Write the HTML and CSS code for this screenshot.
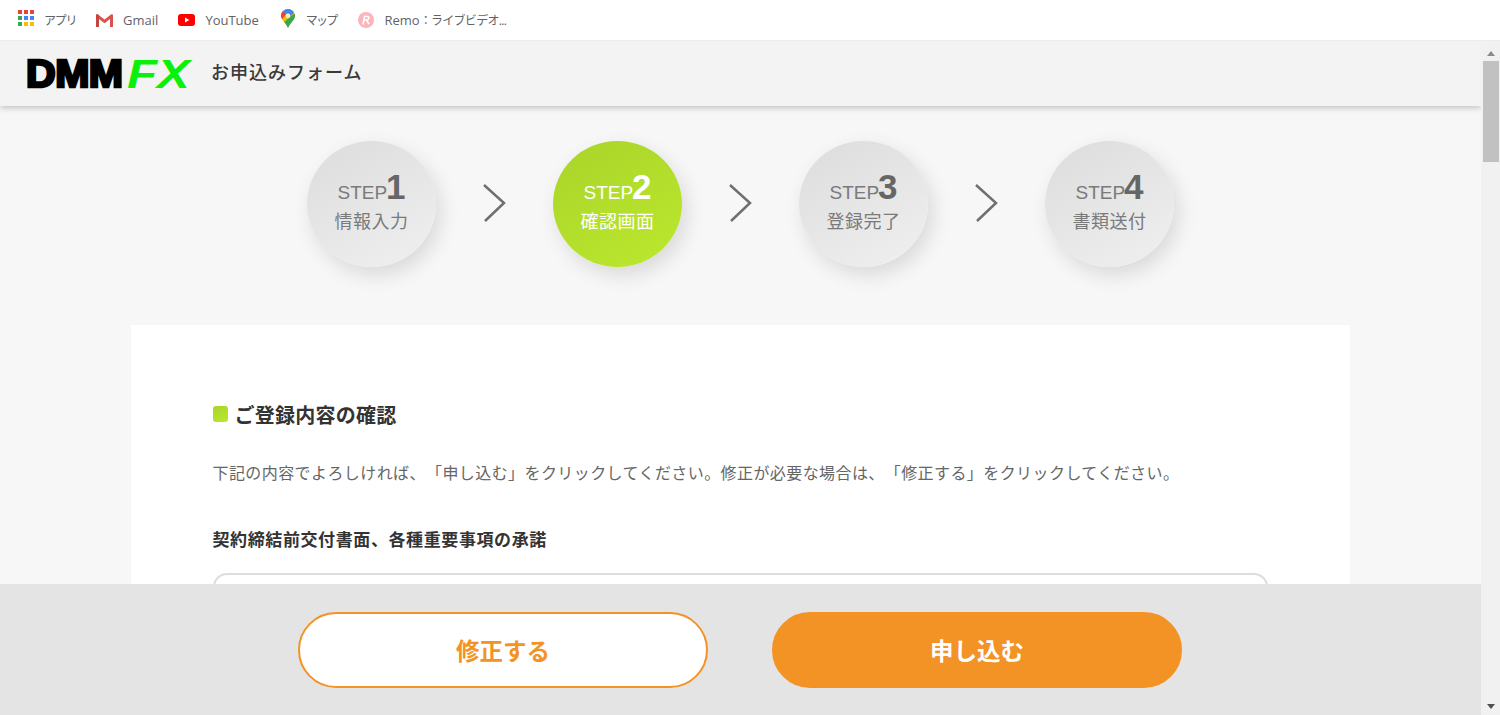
FILE: index.html
```html
<!DOCTYPE html>
<html lang="ja">
<head>
<meta charset="utf-8">
<title>お申込みフォーム</title>
<link rel="stylesheet" href="styles.css">
</head>
<body>
<nav class="bookmarks">
  <a class="bm bm-apps">
    <svg class="ic" width="16" height="16" viewBox="0 0 16 16">
      <rect x="0" y="0" width="4" height="4" fill="#ea4335"/><rect x="6" y="0" width="4" height="4" fill="#ea4335"/><rect x="12" y="0" width="4" height="4" fill="#ea4335"/>
      <rect x="0" y="6" width="4" height="4" fill="#34a853"/><rect x="6" y="6" width="4" height="4" fill="#4285f4"/><rect x="12" y="6" width="4" height="4" fill="#4285f4"/>
      <rect x="0" y="12" width="4" height="4" fill="#34a853"/><rect x="6" y="12" width="4" height="4" fill="#fbbc05"/><rect x="12" y="12" width="4" height="4" fill="#fbbc05"/>
    </svg><span class="kana">アプリ</span></a>
  <a class="bm">
    <svg class="ic" width="17" height="13" viewBox="0 0 17 13">
      <path d="M0 1.500C0 .5 1 0 2 .4L8.500 5.500 15 .4C16 0 17 .5 17 1.500V13H14V5L8.500 9.300 3 5V13H0Z" fill="#d9534a"/>
      <path d="M3 5V13H0V1.500C0 .5 1 0 2 .4L3 1.200Z" fill="#c5453c"/>
    </svg>Gmail</a>
  <a class="bm">
    <svg class="ic" width="17" height="12" viewBox="0 0 17 12">
      <rect width="17" height="12" rx="3" fill="#f00"/><path d="M7 3.500V8.500L11.300 6Z" fill="#fff"/>
    </svg>YouTube</a>
  <a class="bm bm-maps">
    <svg class="ic" width="14" height="19" viewBox="0 0 14 19">
      <path d="M7 0C3 0 0 3 0 6.800 0 11 4.500 13.500 7 19 9.500 13.500 14 11 14 6.800 14 3 11 0 7 0Z" fill="#fbbc05"/>
      <path d="M2 2.100A7 7 0 0 1 7 0V4.500A2.500 2.500 0 0 0 4.800 5.500Z" fill="#4285f4"/>
      <path d="M7 0A7 7 0 0 1 13 3.500L9 8A2.500 2.500 0 0 0 7 4.500Z" fill="#4285f4"/>
      <path d="M0 6.800C0 5 .7 3.400 2 2.100L5 5.500 1.300 10C.5 9 0 8 0 6.800Z" fill="#ea4335"/>
      <path d="M7 19C6 16.500 4.500 14.800 3.200 13L9 8 13.500 4.500C13.800 5.200 14 6 14 6.800 14 11 9.500 13.500 7 19Z" fill="#34a853"/>
      <circle cx="7" cy="6.800" r="2.400" fill="#fbe9b8"/>
    </svg><span class="kana">マップ</span></a>
  <a class="bm bm-remo">
    <svg class="ic" width="16" height="16" viewBox="0 0 16 16">
      <circle cx="8" cy="8" r="8" fill="#fbb5bd"/>
      <path d="M5 12.500 6.500 4.500H9.500C11.500 4.500 11.500 8 8.500 8H6M8.500 8 11 12" fill="none" stroke="#fff" stroke-width="1.600"/>
    </svg>Remo<span class="kana">：ライブビデオ...</span></a>
</nav>

<div class="window">
  <div class="viewport">
    <header class="topbar">
      <div class="logo"><span class="logo-dmm">DMM</span><span class="logo-fx">FX</span></div>
      <div class="form-title">お申込みフォーム</div>
    </header>

    <main class="content">
      <ol class="steps">
        <li class="step">
          <span class="step-top">STEP<b>1</b></span>
          <span class="step-name">情報入力</span>
        </li>
        <li class="arrow"><svg width="24" height="40" viewBox="0 0 24 40"><path d="M2 2 22 20 3 38" fill="none" stroke="#6f6f6f" stroke-width="2.500"/></svg></li>
        <li class="step step-on">
          <span class="step-top">STEP<b>2</b></span>
          <span class="step-name">確認画面</span>
        </li>
        <li class="arrow"><svg width="24" height="40" viewBox="0 0 24 40"><path d="M2 2 22 20 3 38" fill="none" stroke="#6f6f6f" stroke-width="2.500"/></svg></li>
        <li class="step">
          <span class="step-top">STEP<b>3</b></span>
          <span class="step-name">登録完了</span>
        </li>
        <li class="arrow"><svg width="24" height="40" viewBox="0 0 24 40"><path d="M2 2 22 20 3 38" fill="none" stroke="#6f6f6f" stroke-width="2.500"/></svg></li>
        <li class="step">
          <span class="step-top">STEP<b>4</b></span>
          <span class="step-name">書類送付</span>
        </li>
      </ol>

      <section class="card">
        <h2 class="card-title">ご登録内容の確認</h2>
        <p class="lead">下記の内容でよろしければ、「申し込む」をクリックしてください。修正が必要な場合は、「修正する」をクリックしてください。</p>
        <h3 class="sub-title">契約締結前交付書面、各種重要事項の承諾</h3>
        <div class="terms-box"></div>
      </section>
    </main>

    <footer class="actions">
      <button class="btn btn-outline">修正する</button>
      <button class="btn btn-solid">申し込む</button>
    </footer>
  </div>

  <aside class="scrollbar">
    <span class="sb-up"></span>
    <span class="sb-thumb"></span>
    <span class="sb-down"></span>
  </aside>
</div>
</body>
</html>
```

FILE: styles.css
```css
* { box-sizing: border-box; }
html, body { margin: 0; height: 100%; overflow: hidden; }
body {
  display: flex;
  flex-direction: column;
  font-family: "Noto Sans CJK JP", "Liberation Sans", sans-serif;
  background: #fff;
  color: #333;
  text-spacing-trim: space-all;
}

.bookmarks {
  height: 41px;
  flex: none;
  display: flex;
  align-items: center;
  gap: 20px;
  padding: 0 0 0 18px;
  background: #fff;
  border-bottom: 1px solid #ececec;
  font-family: "Open Sans", "Noto Sans CJK JP", sans-serif;
  font-size: 13px;
  color: #5f6368;
}
.bm { display: flex; align-items: center; white-space: nowrap; }
.kana { font-size: 12px; letter-spacing: -1.300px; }
.ic { flex: none; margin-right: 10px; }
.bm-apps .ic { margin-top: -4px; }
.bm-maps { margin-left: 2px; }
.bm-maps .ic { margin-right: 11px; margin-top: -3px; }
.bm-maps .kana { letter-spacing: -1.800px; }
.bm-remo { margin-left: 2px; }
.bm-remo .ic { margin-right: 10px; }
.bm-remo .kana { letter-spacing: -.700px; }

.window { flex: 1; min-height: 0; display: flex; }
.viewport {
  flex: 1;
  min-width: 0;
  position: relative;
  display: flex;
  flex-direction: column;
  overflow: hidden;
  background: #f7f7f7;
}

.topbar {
  height: 65px;
  flex: none;
  display: flex;
  align-items: center;
  padding-left: 25px;
  background: #f3f3f3;
  box-shadow: 0 2px 6px rgba(0, 0, 0, .22);
  position: relative;
  z-index: 1;
}
.logo {
  width: 164px;
  height: 30px;
  flex: none;
  display: flex;
  align-items: center;
  margin-top: 1px;
  font-family: "Liberation Sans", sans-serif;
  font-weight: 700;
  line-height: 30px;
}
.logo-dmm {
  display: inline-block;
  width: 97px;
  padding-left: 1px;
  font-size: 38px;
  letter-spacing: -.5px;
  color: #000;
  -webkit-text-stroke: 2.600px #000;
  transform: scaleX(1.080);
  transform-origin: left center;
}
.logo-fx {
  display: inline-block;
  font-size: 40px;
  font-style: italic;
  color: #0bf00b;
  letter-spacing: 0;
  transform: scaleX(1.230);
  transform-origin: left center;
  margin-left: 5px;
}
.form-title {
  margin-left: 22px;
  margin-top: -6px;
  font-size: 18px;
  letter-spacing: 1px;
  font-weight: 500;
  color: #3a3a3a;
}

.content { flex: 1; display: flex; flex-direction: column; align-items: center; }
.steps {
  list-style: none;
  margin: 35px 0 0;
  padding: 0;
  display: flex;
  align-items: center;
  height: 126px;
  flex: none;
}
.step {
  width: 129px;
  height: 126px;
  border-radius: 50%;
  display: flex;
  flex-direction: column;
  align-items: center;
  background: linear-gradient(150deg, #dcdcdc, #f0f0f0);
  box-shadow: 5px 8px 20px rgba(0, 0, 0, .12);
  color: #7a7a7a;
}
.step-on {
  background: linear-gradient(150deg, #a9d42a, #bce82e);
  color: #fff;
}
.step-top {
  margin-top: 24px;
  height: 38px;
  font-family: "Liberation Sans", sans-serif;
  font-size: 19px;
  line-height: 44px;
  white-space: nowrap;
}
.step-top b { font-size: 35px; color: #666; margin-left: -1px; }
.step-on .step-top b { color: #fff; }
.step-name {
  font-size: 18px;
  letter-spacing: .5px;
  line-height: 26px;
  margin-top: 4px;
  white-space: nowrap;
}
.arrow {
  width: 117px;
  display: flex;
  justify-content: center;
  padding: 0 2px 2px 0;
}

.card {
  width: 1219px;
  flex: 1;
  margin-top: 58px;
  margin-right: 1px;
  padding: 74px 82px 0;
  background: #fff;
}
.card-title {
  margin: 0;
  display: flex;
  align-items: center;
  gap: 7px;
  height: 30px;
  font-size: 20px;
  letter-spacing: .25px;
  font-weight: 700;
  color: #333;
  white-space: nowrap;
}
.card-title::before {
  content: "";
  width: 15px;
  height: 16px;
  border-radius: 3px;
  background: linear-gradient(150deg, #a9d42a, #bce82e);
}
.lead {
  margin: 31px 0 0;
  height: 24px;
  font-size: 16px;
  line-height: 24px;
  letter-spacing: .42px;
  color: #666;
  white-space: nowrap;
}
.sub-title {
  margin: 42px 0 0;
  height: 26px;
  font-size: 17px;
  line-height: 26px;
  letter-spacing: .6px;
  font-weight: 700;
  color: #333;
  white-space: nowrap;
}
.terms-box {
  width: 1055px;
  height: 200px;
  margin-top: 21px;
  border: 2px solid #ddd;
  border-radius: 14px;
  background: #fff;
}

.actions {
  position: absolute;
  left: 0;
  right: 0;
  bottom: 0;
  height: 131px;
  display: flex;
  align-items: center;
  justify-content: center;
  gap: 64px;
  padding: 1px 1px 0 0;
  background: #e4e4e4;
  z-index: 2;
}
.btn {
  width: 410px;
  height: 76px;
  border-radius: 38px;
  border: 2.500px solid #f39325;
  font-family: inherit;
  font-size: 23.500px;
  font-weight: 700;
  padding: 0;
}
.btn-outline { background: #fff; color: #f39325; }
.btn-solid { background: #f39325; color: #fff; }

.scrollbar {
  width: 19px;
  flex: none;
  display: flex;
  flex-direction: column;
  align-items: center;
  padding: 10px 0 6px;
  background: #f1f1f1;
}
.sb-up, .sb-down { width: 0; height: 0; border: 4.500px solid transparent; }
.sb-up { border-top: 0; border-bottom: 5px solid #8a8a8a; }
.sb-down { border-bottom: 0; border-top: 5px solid #505050; margin-top: auto; }
.sb-thumb {
  width: 16px;
  height: 101px;
  margin-top: 5px;
  background: #c1c1c1;
}
```
